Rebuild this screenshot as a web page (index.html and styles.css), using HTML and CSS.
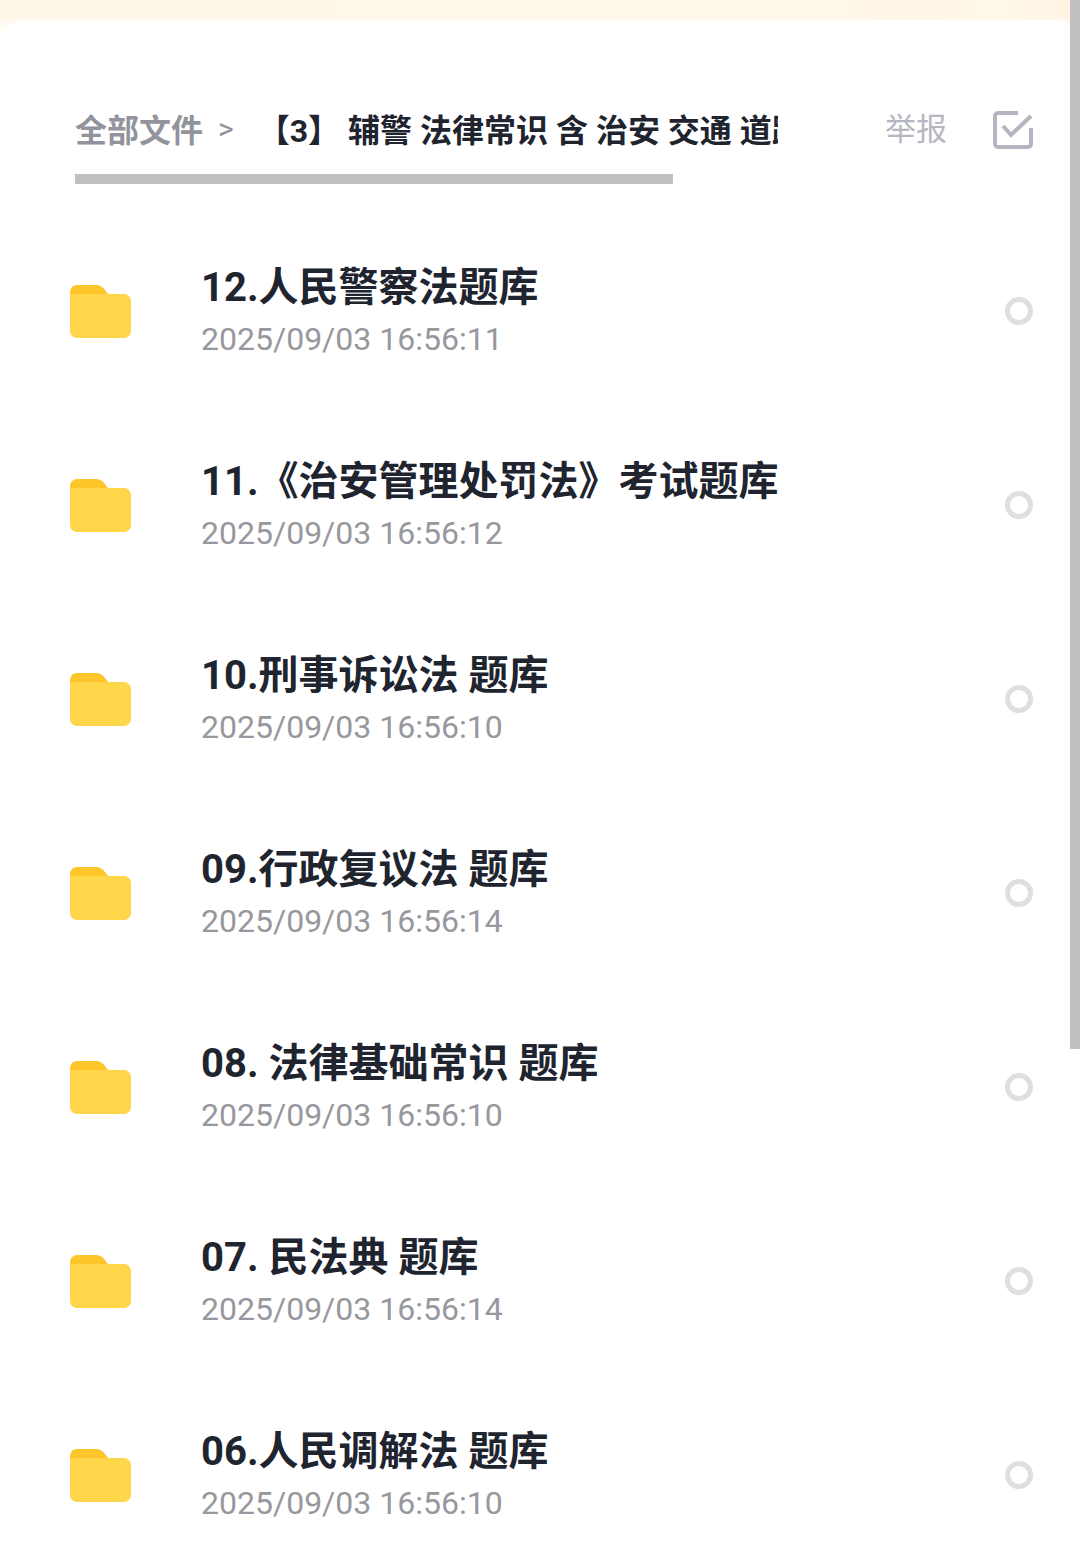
FILE: index.html
```html
<!DOCTYPE html>
<html lang="zh-CN">
<head>
    <meta charset="UTF-8">
    <meta name="viewport" content="width=device-width, initial-scale=1.0">
    <title>全部文件</title>
    <link rel="stylesheet" href="styles.css">
</head>
<body>
    <svg class="sprite" aria-hidden="true">
        <symbol id="folder" viewBox="0 0 61 53">
            <path d="M0 14V7a7 7 0 0 1 7-7h18c5 0 8 2 10 5l3 4v6H0z" fill="#ffc62b"/>
            <path d="M0 9h54a7 7 0 0 1 7 7v30a7 7 0 0 1-7 7H7a7 7 0 0 1-7-7z" fill="#ffd54a"/>
        </symbol>
    </svg>

    <div class="banner"></div>

    <main class="panel">
        <header class="header">
            <nav class="path">
                <div class="crumbs">
                    <a href="#" class="crumb-root">全部文件</a>
                    <span class="crumb-arrow">&gt;</span>
                    <span class="crumb-current">【3】 辅警 法律常识 含 治安 交通 道路</span>
                </div>
                <div class="path-scroll"></div>
            </nav>
            <div class="actions">
                <button type="button" class="report">举报</button>
                <button type="button" class="select-all" aria-label="全选">
                    <svg width="40" height="40" viewBox="0 0 40 40" fill="none" stroke="#b4b5c0" stroke-width="4">
                        <path d="M25 3H5a3 3 0 0 0-3 3v28a3 3 0 0 0 3 3h30a3 3 0 0 0 3-3V18"/>
                        <path d="M10 16l8 9L38 6"/>
                    </svg>
                </button>
            </div>
        </header>

        <ul class="files">
            <li class="file">
                <svg class="folder"><use href="#folder"/></svg>
                <label class="info" for="f12">
                    <span class="name">12.人民警察法题库</span>
                    <span class="date">2025/09/03 16:56:11</span>
                </label>
                <input type="checkbox" class="check" id="f12">
            </li>
            <li class="file">
                <svg class="folder"><use href="#folder"/></svg>
                <label class="info" for="f11">
                    <span class="name">11.《治安管理处罚法》考试题库</span>
                    <span class="date">2025/09/03 16:56:12</span>
                </label>
                <input type="checkbox" class="check" id="f11">
            </li>
            <li class="file">
                <svg class="folder"><use href="#folder"/></svg>
                <label class="info" for="f10">
                    <span class="name">10.刑事诉讼法 题库</span>
                    <span class="date">2025/09/03 16:56:10</span>
                </label>
                <input type="checkbox" class="check" id="f10">
            </li>
            <li class="file">
                <svg class="folder"><use href="#folder"/></svg>
                <label class="info" for="f09">
                    <span class="name">09.行政复议法 题库</span>
                    <span class="date">2025/09/03 16:56:14</span>
                </label>
                <input type="checkbox" class="check" id="f09">
            </li>
            <li class="file">
                <svg class="folder"><use href="#folder"/></svg>
                <label class="info" for="f08">
                    <span class="name">08. 法律基础常识 题库</span>
                    <span class="date">2025/09/03 16:56:10</span>
                </label>
                <input type="checkbox" class="check" id="f08">
            </li>
            <li class="file">
                <svg class="folder"><use href="#folder"/></svg>
                <label class="info" for="f07">
                    <span class="name">07. 民法典 题库</span>
                    <span class="date">2025/09/03 16:56:14</span>
                </label>
                <input type="checkbox" class="check" id="f07">
            </li>
            <li class="file">
                <svg class="folder"><use href="#folder"/></svg>
                <label class="info" for="f06">
                    <span class="name">06.人民调解法 题库</span>
                    <span class="date">2025/09/03 16:56:10</span>
                </label>
                <input type="checkbox" class="check" id="f06">
            </li>
        </ul>
    </main>

    <div class="page-scroll"></div>
</body>
</html>
```
FILE: styles.css
```css
* {
    box-sizing: border-box;
}

body {
    margin: 0;
    height: 100vh;
    overflow: hidden;
    background-color: #fff;
    color: #20242f;
    font-family: Roboto, "Noto Sans CJK SC", sans-serif;
}

.sprite {
    display: block;
    width: 0;
    height: 0;
}

.banner {
    height: 40px;
    background:
        linear-gradient(transparent 40%, #fff 90%),
        linear-gradient(90deg, #fff6ea, #fff8ea 30%, #fff9ec 75%, #fff4e6 85%, #fff9ea 92%, #fff3e2);
}

.panel {
    margin-top: -20px;
    padding: 80px 47px 0 70px;
    background-color: #fff;
    border-radius: 24px 24px 0 0;
}

/* Path bar */
.header {
    display: flex;
    align-items: flex-start;
    justify-content: space-between;
    padding-left: 5px;
    margin-bottom: 30px;
}

.path {
    flex: 1;
    min-width: 0;
    overflow: hidden;
}

.crumbs {
    display: flex;
    align-items: center;
    height: 56px;
    margin-bottom: 18px;
    font-size: 32px;
    white-space: nowrap;
}

.crumb-root {
    color: #92949d;
    font-weight: bold;
    text-decoration: none;
}

.crumb-arrow {
    margin: 0 24px 0 15px;
    color: #92949d;
    font-size: 30px;
}

.crumb-current {
    font-weight: bold;
}

.path-scroll {
    width: 85%;
    height: 10px;
    background-color: #c0c0c0;
}

.actions {
    display: flex;
    align-items: center;
    gap: 46px;
    height: 60px;
    margin-left: 107px;
}

.actions button {
    padding: 0;
    border: none;
    background: none;
    cursor: pointer;
}

.actions .report {
    color: #b4b6c2;
    font-family: inherit;
    font-size: 31px;
    line-height: 44px;
}

.select-all svg {
    display: block;
}

/* File list */
.files {
    margin: 0;
    padding: 0;
    list-style: none;
}

.file {
    display: flex;
    align-items: center;
    height: 194px;
}

.folder {
    width: 61px;
    height: 53px;
    margin-right: 70px;
}

.info {
    flex: 1;
    display: flex;
    flex-direction: column;
}

.name {
    font-size: 40px;
    font-weight: bold;
    line-height: 56px;
}

.date {
    color: #97989e;
    font-size: 32px;
    line-height: 46px;
}

.check {
    appearance: none;
    width: 28px;
    height: 28px;
    margin: 0;
    border: 5px solid #dfdfdf;
    border-radius: 50%;
}

.check:checked {
    background-color: #ffd54a;
}

.page-scroll {
    position: fixed;
    top: 0;
    right: 0;
    width: 10px;
    height: 1049px;
    background-color: #c0c0c0;
}
```
